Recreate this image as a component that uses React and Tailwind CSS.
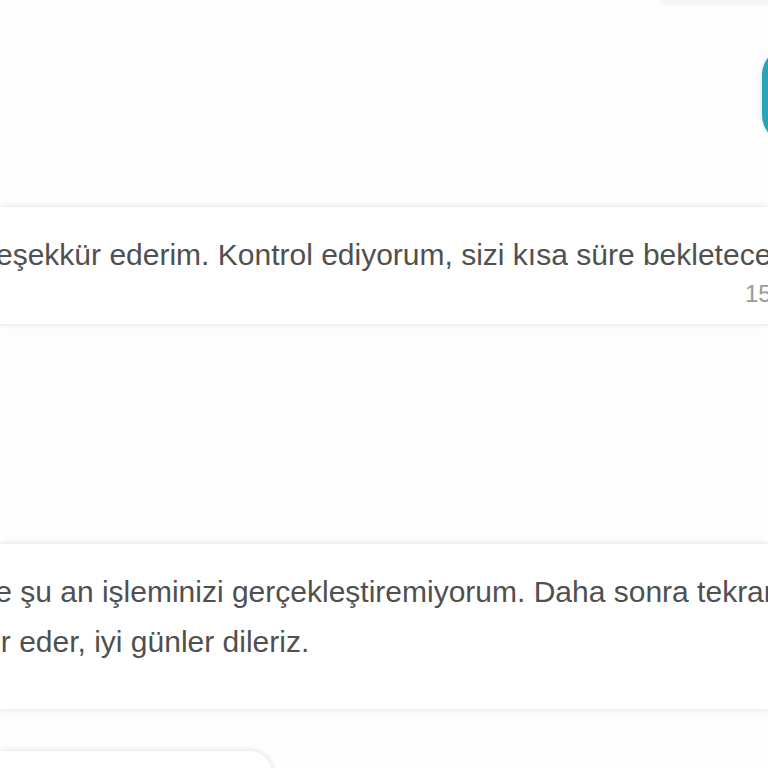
const messages = [
    {
        id: 1,
        lines: [{ text: 'Teşekkür ederim. Kontrol ediyorum, sizi kısa süre bekleteceğim.', offset: 'ml-[-19px]' }],
        time: '15:32',
    },
    {
        id: 2,
        lines: [
            { text: 'Sistemsel bir sorun nedeniyle şu an işleminizi gerçekleştiremiyorum. Daha sonra tekrar deneyebilirsiniz.', offset: 'ml-[-380px]' },
            { text: 'Anlayışınız için teşekkür eder, iyi günler dileriz.', offset: 'ml-[-311px]' },
        ],
    },
]

function AgentCard({ msg, className }) {
    return (
        <div className={`w-full bg-white shadow-[0_0_6px_rgba(0,0,0,0.13)] ${className}`}>
            <div className="text-[30px] leading-[50px] text-[#505050]">
                {msg.lines.map((line, i) => (
                    <div key={i} className={`whitespace-nowrap ${line.offset}`}>
                        {line.text}
                    </div>
                ))}
            </div>
            {msg.time && (
                <div className="ml-[745px] whitespace-nowrap text-[24px] leading-[28px] text-[#9a9a9a]">
                    {msg.time}
                </div>
            )}
        </div>
    )
}

export default function App() {
    return (
        <div
            className="w-[768px] h-[768px] overflow-hidden bg-[#fdfdfd] flex flex-col"
            style={{ fontFamily: '"Liberation Sans", Arial, sans-serif' }}
        >
            {/* previous bubble, cut off at the top */}
            <div className="ml-[660px] w-[140px] h-[6px] shrink-0 bg-[#f6f6f6] rounded-bl-[14px]" />

            {/* user bubble on the right */}
            <div className="mt-[41px] ml-[762px] w-[60px] h-[96px] shrink-0 rounded-l-[28px] bg-[#29a3b5] shadow-[0_0_4px_rgba(40,166,182,0.25)]" />

            <AgentCard msg={messages[0]} className="mt-[64px] pt-[23px] pb-[16px] shrink-0" />

            <AgentCard msg={messages[1]} className="mt-[220px] pt-[23px] pb-[42px] shrink-0" />

            {/* next card, cut off at the bottom */}
            <div className="mt-[42px] w-[272px] h-[60px] shrink-0 bg-white rounded-tr-[22px] shadow-[0_0_6px_rgba(0,0,0,0.13)]" />
        </div>
    )
}
